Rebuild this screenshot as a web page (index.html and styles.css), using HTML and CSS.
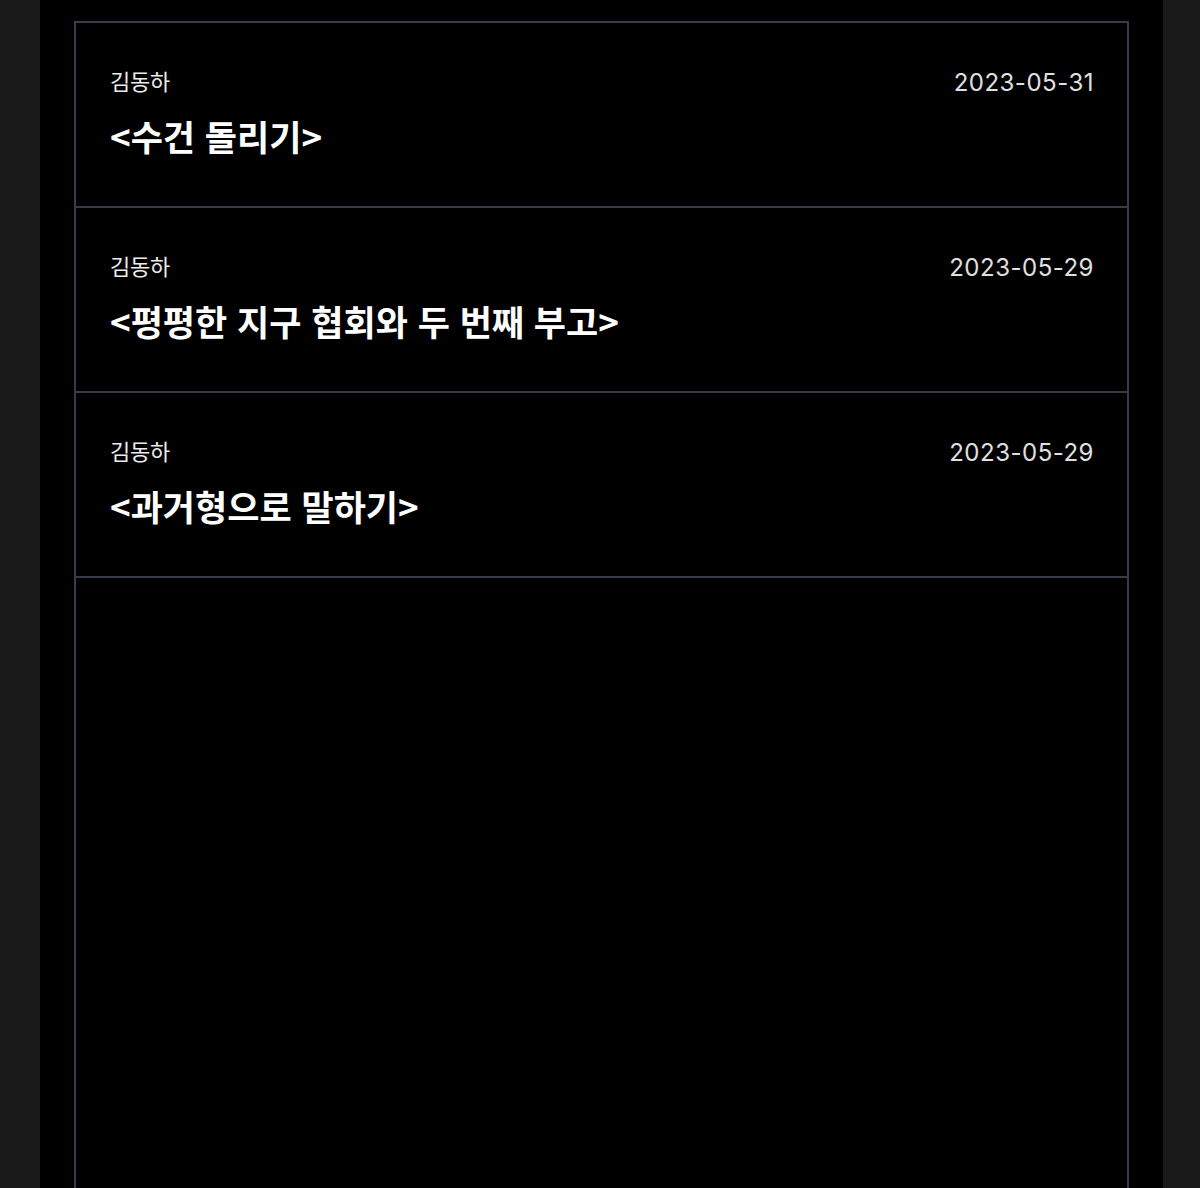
FILE: index.html
```html
<!DOCTYPE html>
<html lang="ko">
<head>
<meta charset="utf-8">
<title>목록</title>
<link rel="stylesheet" href="styles.css">
</head>
<body>
<div class="page">
  <ul class="list">
    <li class="item">
      <div class="meta"><span class="author">김동하</span><span class="date">2023-05-31</span></div>
      <div class="title">&lt;수건 돌리기&gt;</div>
    </li>
    <li class="item">
      <div class="meta"><span class="author">김동하</span><span class="date">2023-05-29</span></div>
      <div class="title">&lt;평평한 지구 협회와 두 번째 부고&gt;</div>
    </li>
    <li class="item">
      <div class="meta"><span class="author">김동하</span><span class="date">2023-05-29</span></div>
      <div class="title">&lt;과거형으로 말하기&gt;</div>
    </li>
  </ul>
</div>
</body>
</html>
```
FILE: styles.css
```css
html, body {
  margin: 0;
  padding: 0;
  background: #1a1a1a;
  height: 100%;
  overflow: hidden;
}
body {
  font-family: "Inter", "Noto Sans CJK KR", sans-serif;
  color: #e4e4e4;
}
.page {
  margin-left: 40px;
  width: 1123px;
  min-height: 1188px;
  background: #000;
  padding-top: 21px;
  box-sizing: border-box;
}
.list {
  list-style: none;
  margin: 0 34px;
  padding: 0;
  border: 2px solid #363c48;
  min-height: 1300px;
}
.item {
  border-bottom: 2px solid #363c48;
  padding: 43px 33px 0 34px;
  box-sizing: content-box;
  height: 140px;
}
.meta {
  display: flex;
  justify-content: space-between;
  align-items: flex-start;
  height: 30px;
}
.author {
  font-family: "Noto Sans CJK KR", sans-serif;
  font-size: 22px;
  line-height: 30px;
  color: #ececec;
  letter-spacing: -0.3px;
  margin-top: -1px;
}
.date {
  font-size: 24px;
  line-height: 30px;
  color: #e0e0e0;
  letter-spacing: 0.5px;
  margin-top: 2px;
}
.title {
  margin-top: 18px;
  font-size: 35px;
  line-height: 44px;
  font-weight: 700;
  color: #fff;
  font-family: "Noto Sans CJK KR", sans-serif;
}
```
